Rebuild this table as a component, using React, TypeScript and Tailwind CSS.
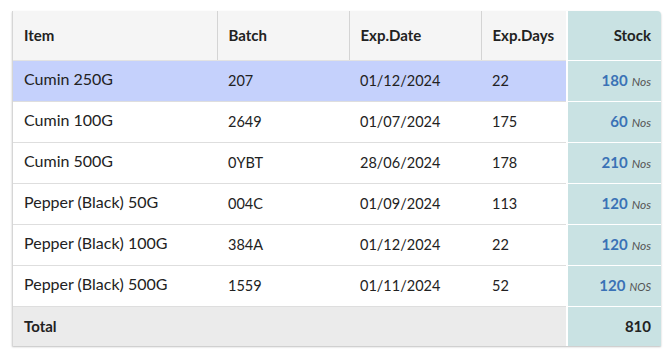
import React from "react";

type Row = { item: string; batch: string; date: string; days: number; stock: number; unit: string };

const rows: Row[] = [
  { item: "Cumin 250G", batch: "207", date: "01/12/2024", days: 22, stock: 180, unit: "Nos" },
  { item: "Cumin 100G", batch: "2649", date: "01/07/2024", days: 175, stock: 60, unit: "Nos" },
  { item: "Cumin 500G", batch: "0YBT", date: "28/06/2024", days: 178, stock: 210, unit: "Nos" },
  { item: "Pepper (Black) 50G", batch: "004C", date: "01/09/2024", days: 113, stock: 120, unit: "Nos" },
  { item: "Pepper (Black) 100G", batch: "384A", date: "01/12/2024", days: 22, stock: 120, unit: "Nos" },
  { item: "Pepper (Black) 500G", batch: "1559", date: "01/11/2024", days: 52, stock: 120, unit: "NOS" },
];

const App: React.FC = () => {
  return (
    <div className="w-[671px] h-[358px] bg-white pt-[11px] pl-[12px] font-['Lato',sans-serif] text-[#222]">
      <div className="w-[649px] rounded-tr-[4px] overflow-hidden border-l border-[#d6d6d6] shadow-[0_1px_2px_rgba(0,0,0,0.25)]">
        <table className="w-full border-collapse table-fixed">
          <colgroup>
            <col className="w-[204px]" />
            <col className="w-[132px]" />
            <col className="w-[132px]" />
            <col className="w-[86px]" />
            <col className="w-[95px]" />
          </colgroup>
          <thead>
            <tr className="h-[49px] bg-[#f5f5f5] text-[15px] font-bold">
              <th className="text-left pl-[11px] border-r border-[#d4d4d4] border-b border-b-[#e2e2e2]">Item</th>
              <th className="text-left pl-[11px] border-r border-[#d4d4d4] border-b border-b-[#e2e2e2]">Batch</th>
              <th className="text-left pl-[11px] border-r border-[#d4d4d4] border-b border-b-[#e2e2e2]">Exp.Date</th>
              <th className="text-left pl-[11px] border-b border-b-[#e2e2e2]">Exp.Days</th>
              <th className="text-right pr-[11px] bg-[#c9e2e3] border-l-2 border-white border-b border-b-white">Stock</th>
            </tr>
          </thead>
          <tbody>
            {rows.map((r, i) => (
              <tr
                key={i}
                className={`h-[41px] text-[14.5px] ${i === 0 ? "bg-[#c5d1fc]" : "bg-white"}`}
              >
                <td className="pl-[11px] text-[16px] pb-[3px] border-b border-[#dedede]">{r.item}</td>
                <td className="pl-[11px] border-b border-[#dedede]">{r.batch}</td>
                <td className="pl-[11px] border-b border-[#dedede]">{r.date}</td>
                <td className="pl-[11px] border-b border-[#dedede]">{r.days}</td>
                <td className="text-right pr-[11px] bg-[#c9e2e3] border-l-2 border-white border-b border-b-white">
                  <span className="font-bold text-[#3a72b6] text-[15px]">{r.stock}</span>
                  <span className={`ml-[4px] italic text-[#555] ${r.unit === "NOS" ? "text-[11px]" : "text-[12px]"}`}>
                    {r.unit}
                  </span>
                </td>
              </tr>
            ))}
            <tr className="h-[40px] bg-[#ebebeb] text-[15px] font-bold">
              <td className="pl-[11px]">Total</td>
              <td />
              <td />
              <td />
              <td className="text-right pr-[11px] bg-[#c9e2e3] border-l-2 border-white">810</td>
            </tr>
          </tbody>
        </table>
      </div>
    </div>
  );
};

export default App;
